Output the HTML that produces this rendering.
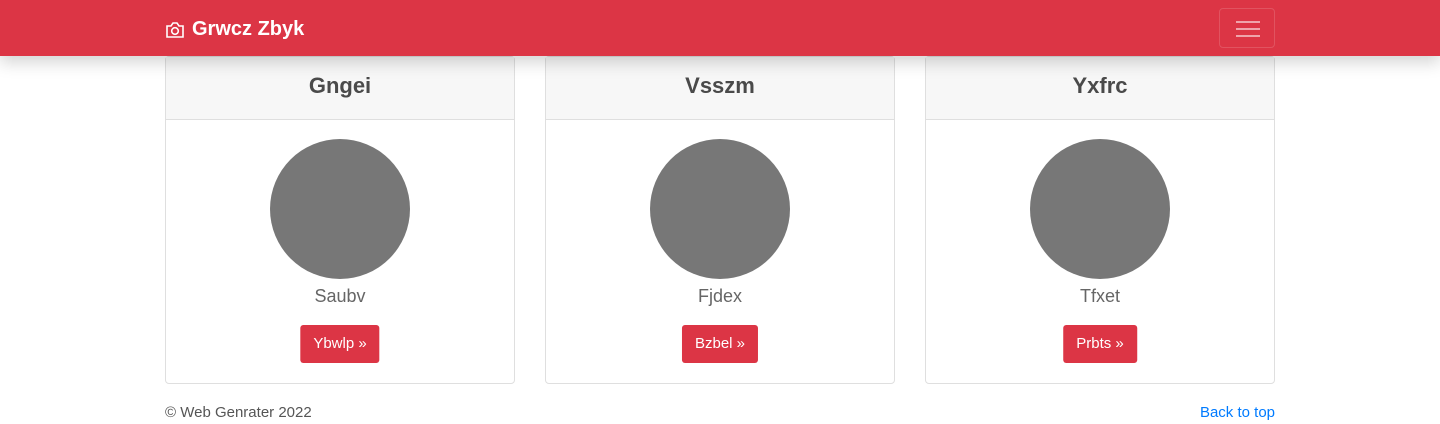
<!DOCTYPE html>
<html><head><meta charset="utf-8"><style>
*{box-sizing:border-box;margin:0;padding:0}
body{width:1440px;height:424px;background:#fff;font-family:"Liberation Sans",sans-serif;color:#212529;position:relative;overflow:hidden}
.nav{position:absolute;top:0;left:0;width:1440px;height:56px;background:#dc3545;box-shadow:0 6px 16px rgba(0,0,0,.18);z-index:2}
.brand{position:absolute;left:165px;top:18px;color:#fff;font-weight:bold;font-size:20px;display:flex;align-items:center;gap:7px}
.tog{position:absolute;left:1219px;top:8px;width:56px;height:40px;border:1px solid rgba(255,255,255,.15);border-radius:4px}
.tog i{position:absolute;left:16px;width:24px;height:2px;background:rgba(255,255,255,.55)}
.card{position:absolute;top:56px;width:350px;height:328px;border:1px solid #dfdfdf;border-radius:4px;background:#fff}
.hd{height:63px;background:#f7f7f7;border-bottom:1px solid #dfdfdf;text-align:center;font-size:22px;line-height:58px;color:#4a4a4a;font-weight:bold}
.c{position:absolute;left:104px;top:82px;width:140px;height:140px;border-radius:50%;background:#777}
.nm{position:absolute;top:229px;width:100%;text-align:center;font-size:18px;color:#666}
.btn{position:absolute;top:268px;left:50%;transform:translateX(-50%);background:#dc3545;color:#fff;font-size:15px;padding:0 13px;height:38px;line-height:38px;border-radius:3px;white-space:nowrap}
.ft{position:absolute;font-size:15px}
</style></head><body>
<div class="nav"><div class="brand"><svg width="20" height="18" viewBox="0 0 20 18" fill="none" stroke="#fff" stroke-width="1.6"><path d="M2 5h4l2-3h4l2 3h4v11H2z"/><circle cx="10" cy="10" r="3.3"/></svg>Grwcz Zbyk</div>
<div class="tog"><i style="top:12px"></i><i style="top:19px"></i><i style="top:26px"></i></div></div>
<div class="card" style="left:165px"><div class="hd">Gngei</div><div class="c"></div><div class="nm">Saubv</div><div class="btn">Ybwlp »</div></div>
<div class="card" style="left:545px"><div class="hd">Vsszm</div><div class="c"></div><div class="nm">Fjdex</div><div class="btn">Bzbel »</div></div>
<div class="card" style="left:925px"><div class="hd">Yxfrc</div><div class="c"></div><div class="nm">Tfxet</div><div class="btn">Prbts »</div></div>
<div class="ft" style="left:165px;top:404px;color:#555">© Web Genrater 2022</div>
<div class="ft" style="right:165px;top:404px;color:#007bff">Back to top</div>
</body></html>
